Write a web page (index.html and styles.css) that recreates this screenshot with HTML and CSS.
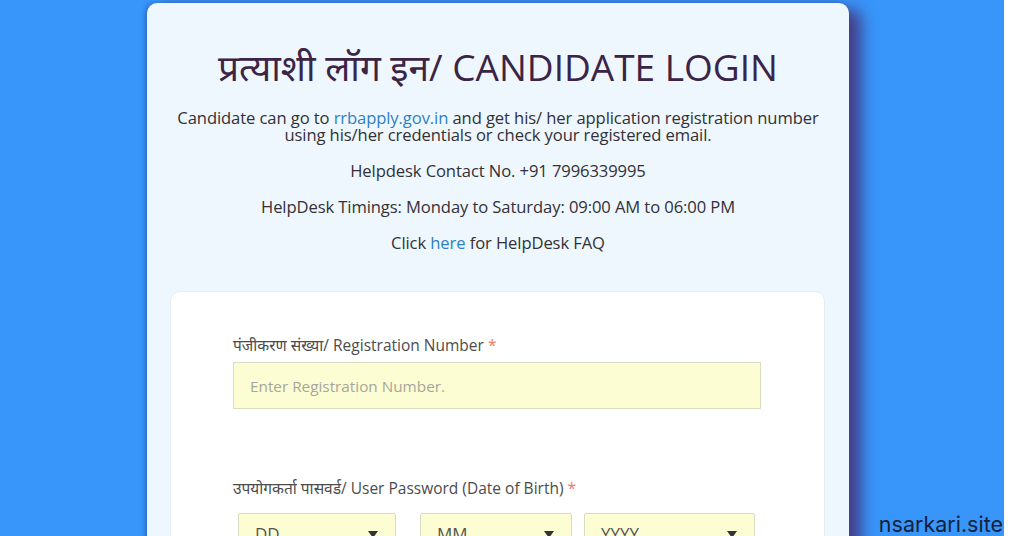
FILE: index.html
```html
<!DOCTYPE html>
<html lang="en">
<head>
<meta charset="utf-8">
<title>Candidate Login</title>
<link rel="stylesheet" href="styles.css">
</head>
<body>
<div class="page">
  <div class="stage">
    <div class="card">
      <h1 class="title">प्रत्याशी लॉग इन/ CANDIDATE LOGIN</h1>
      <p class="info">Candidate can go to <a class="link" href="#">rrbapply.gov.in</a> and get his/ her application registration number<br>using his/her credentials or check your registered email.</p>
      <p class="info">Helpdesk Contact No. +91 7996339995</p>
      <p class="info">HelpDesk Timings: Monday to Saturday: 09:00 AM to 06:00 PM</p>
      <p class="info">Click <a class="link" href="#">here</a> for HelpDesk FAQ</p>
      <div class="form">
        <div class="field">
          <label class="label">पंजीकरण संख्या/ Registration Number <span class="req">*</span></label>
          <div class="input">Enter Registration Number.</div>
        </div>
        <div class="field field-pass">
          <label class="label">उपयोगकर्ता पासवर्ड/ User Password (Date of Birth) <span class="req">*</span></label>
          <div class="selects">
            <div class="select sel-dd"><span>DD</span><span class="caret"></span></div>
            <div class="select sel-mm"><span>MM</span><span class="caret"></span></div>
            <div class="select sel-yy"><span>YYYY</span><span class="caret"></span></div>
          </div>
        </div>
      </div>
    </div>
    <div class="watermark">nsarkari.site</div>
  </div>
  <div class="strip"></div>
</div>
</body>
</html>
```

FILE: styles.css
```css
* { box-sizing: border-box; }
html, body { margin: 0; padding: 0; }
body {
  width: 1024px;
  height: 536px;
  overflow: hidden;
  font-family: "Open Sans", "Noto Sans", "Noto Sans Devanagari", sans-serif;
  background: #ffffff;
}
.page {
  display: flex;
  height: 536px;
}
.stage {
  position: relative;
  width: 1004px;
  height: 536px;
  background: #3896fb;
  overflow: hidden;
  padding-top: 3px;
}
.strip {
  flex: 1;
  background: #ffffff;
}
.card {
  margin-left: 147px;
  width: 702px;
  height: 560px;
  background: #eef7fd;
  border-radius: 10px;
  box-shadow: 12px 6px 16px rgba(70, 45, 110, 0.85), -2px 0 4px rgba(30, 60, 140, 0.45);
  padding-top: 38px;
  text-align: center;
  color: #333036;
}
.title {
  margin: 0 0 16px;
  font-size: 37px;
  font-weight: 400;
  line-height: 52px;
  color: #3b2446;
}
.info {
  margin: 0 0 19px;
  font-size: 16.6px;
  line-height: 17px;
  color: #333036;
  letter-spacing: -0.1px;
}
.link {
  color: #2f7fc4;
  text-decoration: none;
}
.form {
  margin: 40px 24px 0 23px;
  background: #ffffff;
  border: 1px solid #e4edf3;
  border-radius: 10px;
  padding: 44px 63px 0 62px;
  text-align: left;
  height: 300px;
}
.field {
  display: flex;
  flex-direction: column;
}
.field-pass {
  margin-top: 70px;
}
.label {
  font-size: 15.5px;
  line-height: 18px;
  color: #4c4c4c;
  margin-bottom: 8px;
}
.req {
  color: #f07a6a;
}
.input {
  height: 47px;
  background: #fcfdd2;
  border: 1px solid #d9dcc4;
  padding-left: 16px;
  display: flex;
  align-items: center;
  font-size: 15.3px;
  color: #a6a69c;
}
.selects {
  display: flex;
  margin-left: 5px;
  margin-top: 8px;
}
.select {
  height: 40px;
  background: #fcfdd2;
  border: 1px solid #d9dcc4;
  border-radius: 2px;
  display: flex;
  justify-content: space-between;
  align-items: flex-start;
  padding: 8px 17px 0 16px;
  font-size: 17px;
  line-height: 24px;
  color: #555555;
}
.sel-dd { width: 158px; margin-right: 24px; }
.sel-mm { width: 152px; margin-right: 12px; }
.sel-yy { width: 171px; }
.caret {
  width: 0;
  height: 0;
  border-left: 5px solid transparent;
  border-right: 5px solid transparent;
  border-top: 7px solid #333333;
  margin-top: 9px;
}
.watermark {
  position: absolute;
  right: 1px;
  bottom: 0;
  font-family: "Inter", "Open Sans", sans-serif;
  font-size: 21.5px;
  color: #14213a;
  line-height: 24px;
}
```
